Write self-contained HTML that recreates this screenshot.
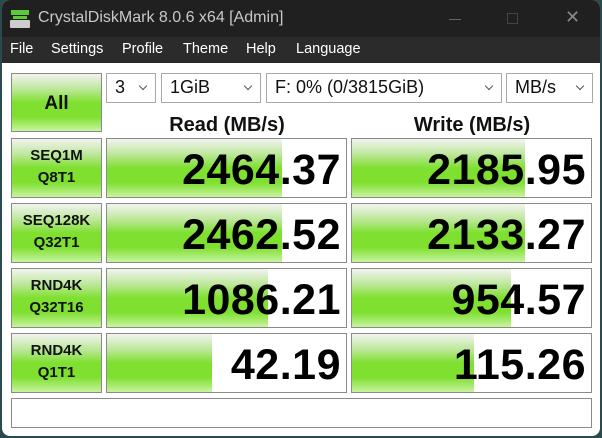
<!DOCTYPE html>
<html><head><meta charset="utf-8"><style>
*{margin:0;padding:0;box-sizing:border-box}
body{width:602px;height:438px;background:#2a4a50;position:relative;overflow:hidden;font-family:"Liberation Sans",sans-serif}
.win{position:absolute;left:2px;top:0;width:598px;height:436px;background:#fff;border-radius:8px;overflow:hidden}
.title{position:absolute;left:0;top:0;width:100%;height:37px;background:#202020;color:#c8c8c8;font-size:16px}
.menu{position:absolute;left:0;top:37px;width:100%;height:26px;background:#2b2b2b;color:#fff;font-size:14.5px}
.menu span{position:absolute;top:4px}
.g{background:linear-gradient(#f2f4f0 0%,#c0e8a0 25%,#7fe030 50%,#7fe030 75%,#c8f4a0 100%)}
.btn{position:absolute;border:1px solid #8a8a8a;text-align:center;font-weight:bold;color:#111}
.combo{position:absolute;top:73px;height:30px;border:1px solid #a8a8a8;font-size:18px;padding:3px 0 0 8px;color:#111}
.combo:after{content:"";position:absolute;right:9px;top:9px;width:5px;height:5px;border-right:1px solid #555;border-bottom:1px solid #555;transform:rotate(45deg)}
.cell{position:absolute;border:1px solid #8a8a8a;background:#fff;overflow:hidden}
.cell .bar{position:absolute;left:0;top:0;bottom:0}
.cell .v{position:absolute;right:5px;top:7px;font-size:43px;font-weight:bold;color:#000;letter-spacing:0.5px}
.hdr{position:absolute;top:114px;font-size:20px;font-weight:bold;color:#111;text-align:center;width:240px}
.lab{font-size:15px;line-height:22px;padding-top:6px}
</style></head><body>
<div class="win">
<div class="title">
 <div style="position:absolute;left:9px;top:10px;width:18px;height:5px;background:#5cc83a"></div>
 <div style="position:absolute;left:11px;top:16px;width:14px;height:3px;background:#5cc83a"></div>
 <div style="position:absolute;left:8px;top:20px;width:20px;height:8px;background:#ccc;border-radius:1px"></div>
 <span style="position:absolute;left:36px;top:9px">CrystalDiskMark 8.0.6 x64 [Admin]</span>
 <div style="position:absolute;left:447px;top:19px;width:12px;height:1px;background:#666"></div>
 <div style="position:absolute;left:505px;top:13px;width:11px;height:11px;border:1px solid #444"></div>
 <span style="position:absolute;left:563px;top:7px;font-size:18px;color:#888">✕</span>
</div>
<div class="menu">
 <span style="left:8px">File</span><span style="left:49px">Settings</span><span style="left:120px">Profile</span><span style="left:181px">Theme</span><span style="left:244px">Help</span><span style="left:294px">Language</span>
</div>
<div class="btn g" style="left:9px;top:73px;width:91px;height:59px;font-size:19px;padding-top:19px">All</div>
<div class="combo" style="left:104px;width:50px">3</div>
<div class="combo" style="left:159px;width:100px">1GiB</div>
<div class="combo" style="left:264px;width:236px">F: 0% (0/3815GiB)</div>
<div class="combo" style="left:504px;width:87px">MB/s</div>
<div class="hdr" style="left:105px">Read (MB/s)</div>
<div class="hdr" style="left:350px">Write (MB/s)</div>

<div class="btn g lab" style="left:9px;top:138px;width:91px;height:60px">SEQ1M<br>Q8T1</div>
<div class="cell" style="left:104px;top:138px;width:241px;height:60px"><div class="bar g" style="width:175px"></div><div class="v">2464.37</div></div>
<div class="cell" style="left:349px;top:138px;width:241px;height:60px"><div class="bar g" style="width:173px"></div><div class="v">2185.95</div></div>

<div class="btn g lab" style="left:9px;top:203px;width:91px;height:60px">SEQ128K<br>Q32T1</div>
<div class="cell" style="left:104px;top:203px;width:241px;height:60px"><div class="bar g" style="width:175px"></div><div class="v">2462.52</div></div>
<div class="cell" style="left:349px;top:203px;width:241px;height:60px"><div class="bar g" style="width:173px"></div><div class="v">2133.27</div></div>

<div class="btn g lab" style="left:9px;top:268px;width:91px;height:60px">RND4K<br>Q32T16</div>
<div class="cell" style="left:104px;top:268px;width:241px;height:60px"><div class="bar g" style="width:161px"></div><div class="v">1086.21</div></div>
<div class="cell" style="left:349px;top:268px;width:241px;height:60px"><div class="bar g" style="width:159px"></div><div class="v">954.57</div></div>

<div class="btn g lab" style="left:9px;top:333px;width:91px;height:60px">RND4K<br>Q1T1</div>
<div class="cell" style="left:104px;top:333px;width:241px;height:60px"><div class="bar g" style="width:105px"></div><div class="v">42.19</div></div>
<div class="cell" style="left:349px;top:333px;width:241px;height:60px"><div class="bar g" style="width:122px"></div><div class="v">115.26</div></div>

<div class="cell" style="left:9px;top:398px;width:581px;height:30px"></div>
</div>
</body></html>
